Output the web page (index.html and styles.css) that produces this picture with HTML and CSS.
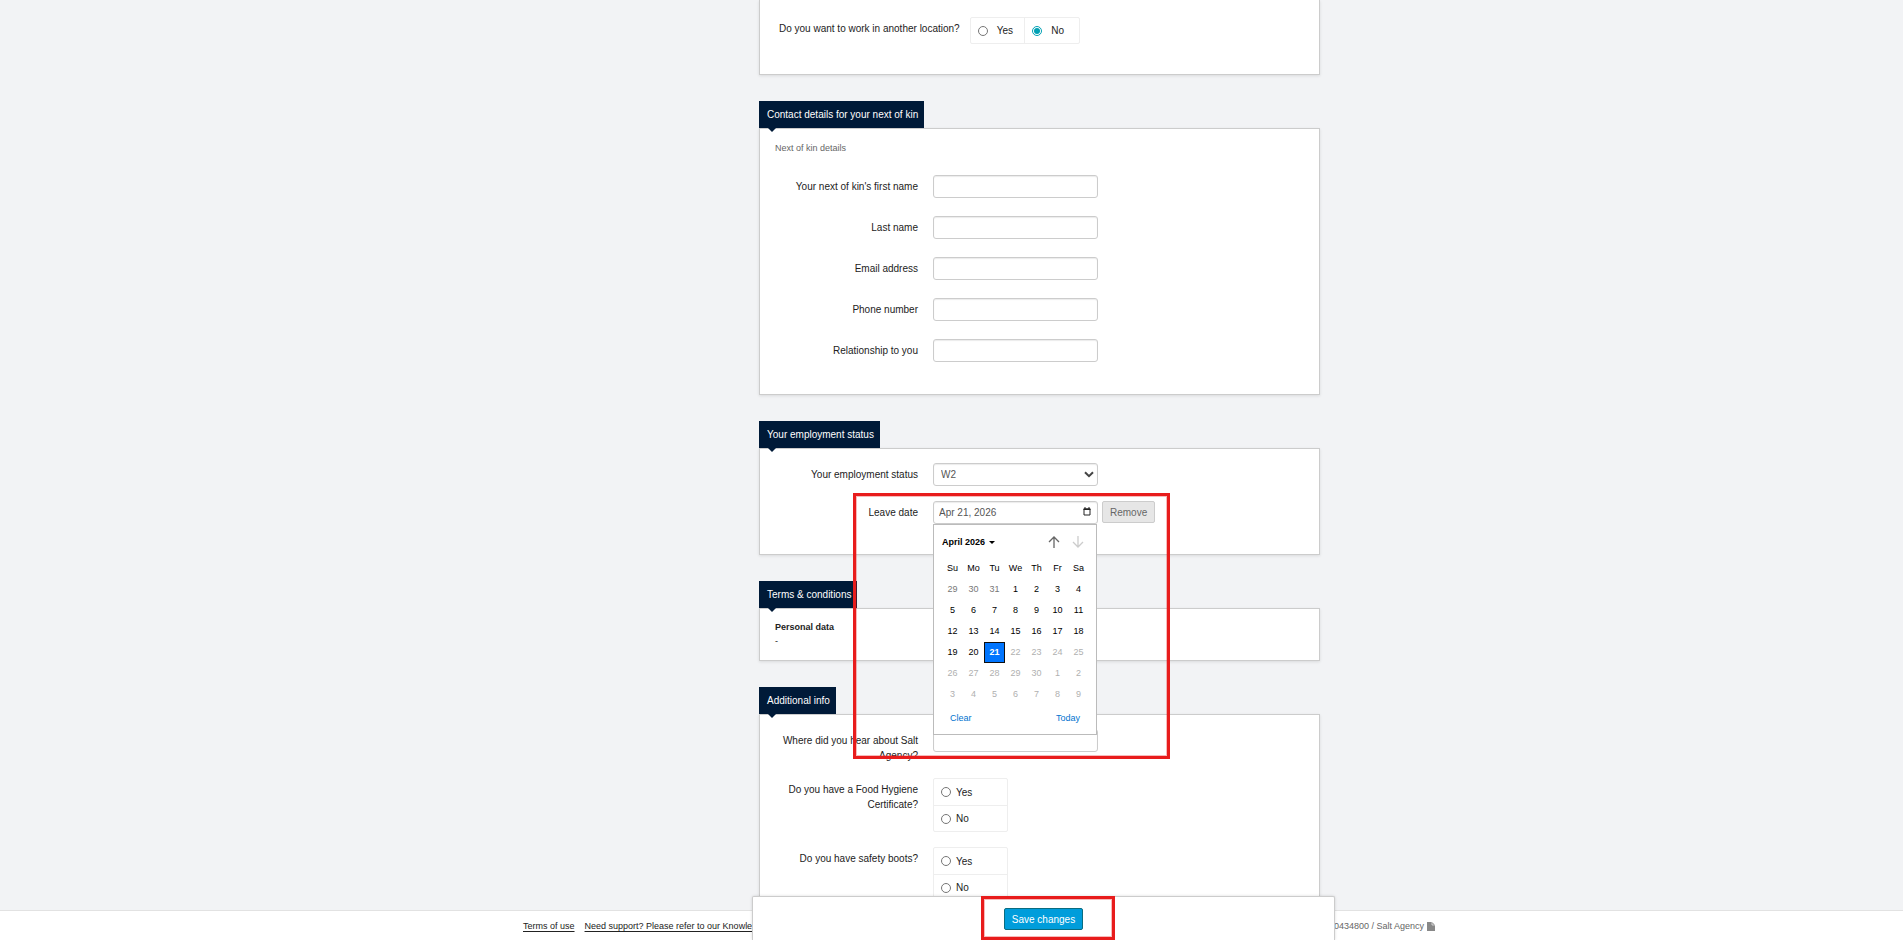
FILE: index.html
```html
<!DOCTYPE html>
<html lang="en">
<head>
  <meta charset="UTF-8" />
  <meta name="viewport" content="width=device-width, initial-scale=1" />
  <title>Profile</title>
  <link rel="stylesheet" href="styles.css">
</head>
<body>

  <main class="content">
    <div class="container">
      <form class="sections" id="profileForm">

        <section class="panel panel-open">
          <div class="row row-wide">
            <span class="label" id="otherLocation">Do you want to work in another location?</span>
            <div class="radios radios-inline" role="radiogroup" aria-labelledby="otherLocation">
              <label><input type="radio" name="location" value="yes" /> Yes</label>
              <label><input type="radio" name="location" value="no" checked /> No</label>
            </div>
          </div>
        </section>

        <h2 class="tab">Contact details for your next of kin</h2>
        <section class="panel panel-kin">
          <p class="hint">Next of kin details</p>
          <div class="row">
            <label class="label" for="kinFirst">Your next of kin's first name</label>
            <input class="field" type="text" id="kinFirst" />
          </div>
          <div class="row">
            <label class="label" for="kinLast">Last name</label>
            <input class="field" type="text" id="kinLast" />
          </div>
          <div class="row">
            <label class="label" for="kinEmail">Email address</label>
            <input class="field" type="email" id="kinEmail" />
          </div>
          <div class="row">
            <label class="label" for="kinPhone">Phone number</label>
            <input class="field" type="tel" id="kinPhone" />
          </div>
          <div class="row">
            <label class="label" for="kinRelation">Relationship to you</label>
            <input class="field" type="text" id="kinRelation" />
          </div>
        </section>

        <h2 class="tab">Your employment status</h2>
        <section class="panel panel-status">
          <div class="row">
            <label class="label" for="status">Your employment status</label>
            <div class="field-wrap">
              <select class="field" id="status">
                <option>W2</option>
              </select>
              <svg class="chevron" viewBox="0 0 10 7" aria-hidden="true"><path d="M1 1.2 5 5.2 9 1.2" fill="none" stroke="#444" stroke-width="2"/></svg>
            </div>
          </div>
          <div class="row">
            <label class="label" for="leaveDate">Leave date</label>
            <div class="field-wrap">
              <input class="field date" type="text" id="leaveDate" value="Apr 21, 2026" />
              <svg class="date-icon" viewBox="0 0 8 9" aria-hidden="true"><path d="M1 2h6v6H1z" fill="none" stroke="#222"/><path d="M.5 1.5h7V3h-7zM1.5 0h1v2h-1zM5.5 0h1v2h-1z" fill="#222"/></svg>

              <div class="calendar">
                <div class="cal-head">
                  <button type="button" class="cal-month">April 2026 <span class="caret"></span></button>
                  <button type="button" class="cal-nav" aria-label="Previous month"><svg viewBox="0 0 12 12"><path d="M6 12V1M1 6l5-5 5 5" fill="none" stroke="#666" stroke-width="1.3"/></svg></button>
                  <button type="button" class="cal-nav" aria-label="Next month" disabled><svg viewBox="0 0 12 12"><path d="M6 0v11M1 6l5 5 5-5" fill="none" stroke="#ccc" stroke-width="1.3"/></svg></button>
                </div>
                <table class="cal-days">
                  <thead>
                    <tr><th>Su</th><th>Mo</th><th>Tu</th><th>We</th><th>Th</th><th>Fr</th><th>Sa</th></tr>
                  </thead>
                  <tbody>
                    <tr><td class="prev">29</td><td class="prev">30</td><td class="prev">31</td><td>1</td><td>2</td><td>3</td><td>4</td></tr>
                    <tr><td>5</td><td>6</td><td>7</td><td>8</td><td>9</td><td>10</td><td>11</td></tr>
                    <tr><td>12</td><td>13</td><td>14</td><td>15</td><td>16</td><td>17</td><td>18</td></tr>
                    <tr><td>19</td><td>20</td><td class="selected">21</td><td class="off">22</td><td class="off">23</td><td class="off">24</td><td class="off">25</td></tr>
                    <tr class="off"><td>26</td><td>27</td><td>28</td><td>29</td><td>30</td><td>1</td><td>2</td></tr>
                    <tr class="off"><td>3</td><td>4</td><td>5</td><td>6</td><td>7</td><td>8</td><td>9</td></tr>
                  </tbody>
                </table>
                <div class="cal-foot">
                  <button type="button">Clear</button>
                  <button type="button">Today</button>
                </div>
              </div>
              <div class="highlight highlight-date"></div>
            </div>
            <button type="button" class="remove">Remove</button>
          </div>
        </section>

        <h2 class="tab">Terms &amp; conditions</h2>
        <section class="panel panel-terms">
          <strong>Personal data</strong>
          <span>-</span>
        </section>

        <h2 class="tab">Additional info</h2>
        <section class="panel panel-status">
          <div class="row">
            <label class="label" for="hearAbout">Where did you hear about Salt Agency?</label>
            <input class="field" type="text" id="hearAbout" />
          </div>
          <div class="row">
            <span class="label" id="hygiene">Do you have a Food Hygiene Certificate?</span>
            <div class="radios" role="radiogroup" aria-labelledby="hygiene">
              <label><input type="radio" name="hygiene" value="yes" /> Yes</label>
              <label><input type="radio" name="hygiene" value="no" /> No</label>
            </div>
          </div>
          <div class="row">
            <span class="label" id="boots">Do you have safety boots?</span>
            <div class="radios" role="radiogroup" aria-labelledby="boots">
              <label><input type="radio" name="boots" value="yes" /> Yes</label>
              <label><input type="radio" name="boots" value="no" /> No</label>
            </div>
          </div>
        </section>

      </form>
    </div>
  </main>

  <footer class="footer">
    <div class="container footer-inner">
      <a href="#">Terms of use</a>
      <a href="#">Need support? Please refer to our Knowle</a>
      <span class="agency">0434800 / Salt Agency
        <svg viewBox="0 0 8 9" aria-hidden="true"><path d="M0 0h5l3 3v6H0z" fill="#888"/><path d="M5 0v3h3" fill="none" stroke="#fff" stroke-width=".6"/></svg>
      </span>
    </div>
  </footer>

  <div class="save-layer">
    <div class="container">
      <div class="save-bar">
        <div class="save-wrap">
          <button type="submit" form="profileForm" class="save">Save changes</button>
          <div class="highlight highlight-save"></div>
        </div>
      </div>
    </div>
  </div>

</body>
</html>
```
FILE: styles.css
```css
* {
  box-sizing: border-box;
}
body {
  display: flex;
  flex-direction: column;
  height: 100vh;
  margin: 0;
  overflow: hidden;
  background: #f2f3f5;
  color: #222;
  font: 10px/15px "Liberation Sans", Arial, sans-serif;
}
button, input, select {
  margin: 0;
  font: inherit;
}
.container {
  width: 100%;
  max-width: 967px;
  margin: 0 auto;
}
.content {
  flex: 1;
  min-height: 0;
  overflow: hidden;
}
.sections {
  margin: 0 115px 0 291px;
}

/* panels */
.panel {
  padding: 14px 15px 30px;
  margin-bottom: 26px;
  background: #fff;
  border: 1px solid #ccc;
  box-shadow: 0 1px 3px rgba(0, 0, 0, 0.1);
}
.panel-open {
  padding-top: 17px;
  border-top: 0;
}
.panel-kin {
  padding-top: 12px;
  padding-bottom: 32px;
}
.panel-terms {
  display: flex;
  flex-direction: column;
  padding: 11px 15px 12px;
  font-size: 9px;
  line-height: 14px;
}
.tab {
  position: relative;
  width: fit-content;
  height: 27px;
  margin: 0;
  padding: 0 6px 0 8px;
  background: #001a38;
  color: #fff;
  font-size: 10px;
  font-weight: normal;
  line-height: 27px;
}
.tab::after {
  content: "";
  position: absolute;
  top: 100%;
  left: 9px;
  border: 4px solid transparent;
  border-top-color: #001a38;
  border-bottom: 0;
}
.hint {
  margin: 0 0 19px;
  color: #666;
  font-size: 9px;
}

/* form rows */
.row {
  display: flex;
  align-items: flex-start;
  gap: 4px;
}
.row + .row {
  margin-top: 15px;
}
.panel-kin .row + .row {
  margin-top: 18px;
}
.label {
  width: 143px;
  margin-right: 11px;
  padding-top: 4px;
  text-align: right;
}
.row-wide .label {
  width: auto;
  margin-right: 6px;
  padding-left: 4px;
}
.field-wrap {
  position: relative;
}
.field {
  display: block;
  width: 165px;
  height: 23px;
  padding: 0 8px;
  background: #fff;
  border: 1px solid #ccc;
  border-radius: 3px;
  box-shadow: inset 0 1px 1px rgba(0, 0, 0, 0.08);
  color: #555;
}
select.field {
  padding: 0 7px;
  appearance: none;
}
.date {
  padding: 0 5px;
}
.chevron {
  position: absolute;
  top: 8px;
  right: 4px;
  width: 10px;
  height: 7px;
}
.date-icon {
  position: absolute;
  top: 6px;
  right: 7px;
  width: 8px;
  height: 9px;
}
.remove {
  height: 22px;
  padding: 0 7px;
  background: #e6e6e6;
  border: 1px solid #ccc;
  border-radius: 2px;
  color: #666;
}

/* radio groups */
.radios {
  width: 75px;
  border: 1px solid #eee;
  border-radius: 2px;
}
.radios label {
  display: flex;
  align-items: center;
  gap: 5px;
  height: 26px;
  padding-left: 7px;
}
.radios label + label {
  border-top: 1px solid #eee;
}
.radios input {
  width: 10px;
  height: 10px;
  accent-color: #00a0b4;
}
.radios-inline {
  display: flex;
  width: 110px;
}
.radios-inline label {
  flex: 1;
  height: 25px;
  gap: 9px;
}
.radios-inline label + label {
  border-top: 0;
  border-left: 1px solid #eee;
}

/* calendar popup */
.calendar {
  position: absolute;
  top: 100%;
  left: 0;
  z-index: 2;
  width: 164px;
  padding: 7px 7px 6px 8px;
  background: #fff;
  border: 1px solid #bbb;
  color: #000;
  font-size: 9px;
}
.calendar button {
  padding: 0;
  background: none;
  border: 0;
}
.cal-head {
  display: flex;
  align-items: center;
  gap: 12px;
  height: 20px;
  margin-bottom: 6px;
  padding-right: 5px;
}
.calendar .cal-month {
  display: flex;
  align-items: center;
  gap: 4px;
  margin-right: auto;
  color: #000;
  font-weight: bold;
}
.caret {
  border: 3px solid transparent;
  border-top-color: #000;
  border-bottom: 0;
}
.cal-nav svg {
  display: block;
  width: 12px;
  height: 12px;
}
.cal-days {
  border-collapse: collapse;
  table-layout: fixed;
  width: 147px;
}
.cal-days th,
.cal-days td {
  height: 21px;
  padding: 0;
  font-weight: normal;
  text-align: center;
}
.cal-days .prev {
  color: #777;
}
.cal-days .off {
  color: #b0b0b0;
}
.cal-days .selected {
  background: #0075ff;
  outline: 1px solid #101010;
  outline-offset: -1px;
  color: #fff;
  font-weight: bold;
}
.cal-foot {
  display: flex;
  justify-content: space-between;
  height: 20px;
  margin-top: 3px;
  padding: 0 9px 0 8px;
}
.calendar .cal-foot button {
  color: #0073cf;
}

/* red callout frames */
.highlight {
  position: absolute;
  z-index: 3;
  border: 3px solid #e81c1c;
  box-shadow: inset 0 0 0 1px rgba(232, 28, 28, 0.3);
  pointer-events: none;
}
.highlight-date {
  top: -8px;
  left: -80px;
  width: 317px;
  height: 266px;
}
.highlight-save {
  inset: -12px -32px -10px -23px;
}

/* footer */
.footer {
  background: #fff;
  border-top: 1px solid #e2e2e2;
  color: #666;
  font-size: 9px;
}
.footer-inner {
  display: flex;
  gap: 10px;
  padding: 8px 0 6px 55px;
}
.footer a {
  color: #222;
  text-underline-offset: 2px;
}
.agency {
  display: flex;
  align-items: center;
  gap: 3px;
  margin-left: auto;
}
.agency svg {
  width: 8px;
  height: 9px;
}

/* save bar */
.save-layer {
  position: fixed;
  right: 0;
  bottom: 0;
  left: 0;
  z-index: 5;
}
.save-bar {
  display: flex;
  justify-content: center;
  margin: 0 100px 0 284px;
  padding: 11px 0 10px;
  background: #fff;
  border: 1px solid #ccc;
  border-bottom: 0;
  border-radius: 2px 2px 0 0;
  box-shadow: 0 0 3px rgba(0, 0, 0, 0.15);
}
.save-wrap {
  position: relative;
}
.save {
  display: block;
  height: 22px;
  padding: 0 7px;
  background: #009ddb;
  border: 1px solid #0a6c80;
  border-radius: 2px;
  color: #fff;
}
```
